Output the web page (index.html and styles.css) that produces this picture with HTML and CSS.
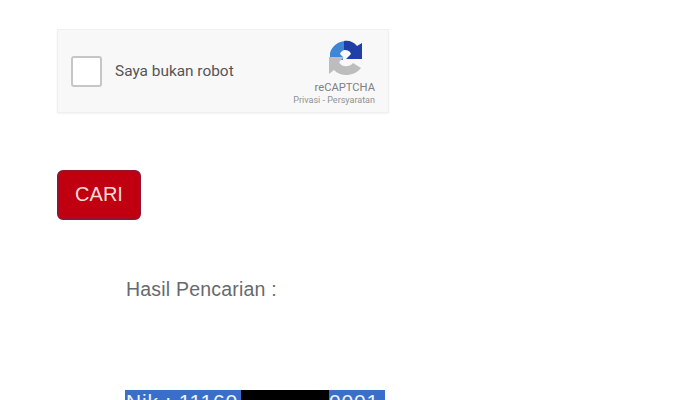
FILE: index.html
```html
<!DOCTYPE html>
<html lang="id">
<head>
<meta charset="utf-8">
<title>Hasil Pencarian</title>
<link rel="stylesheet" href="styles.css">
</head>
<body>
<main class="page">
  <div class="captcha">
    <span class="check"></span>
    <span class="captcha-label">Saya bukan robot</span>
    <div class="brand">
      <svg class="logo" viewBox="0 0 34 36" width="34" height="36" aria-hidden="true">
        <path fill="#3f86d6" d="M1 20 L1 13 C3 6 9 1 17 1 L20 1 L20 10 C15 9 12 11 11 14 L14 17 L14 20 Z"/>
        <path fill="#1f3fa6" d="M15 1 C20 0 25 2 28 6 L33 3 L33 19 L17 19 L22 14 C21 11 19 10 15 10 Z"/>
        <path fill="#bdbdbd" d="M0 17 L15 17 L10 22 C12 27 20 28 24 23 L32 28 C26 36 12 38 5 30 L0 34 Z"/>
      </svg>
      <span class="brand-name">reCAPTCHA</span>
      <span class="brand-links">Privasi - Persyaratan</span>
    </div>
  </div>
  <button class="search" type="button">CARI</button>
  <section class="results">
    <h2 class="results-title">Hasil Pencarian :</h2>
    <p class="nik"><span class="nik-start">Nik : 11160</span><span class="redact"></span><span class="nik-end">0001</span></p>
  </section>
</main>
</body>
</html>
```

FILE: styles.css
```css
html, body {
  margin: 0;
  height: 400px;
  overflow: hidden;
  background: #fff;
}
body {
  font-family: "Liberation Sans", Arial, sans-serif;
}
.page {
  padding: 29px 0 0 57px;
}
.captcha {
  box-sizing: border-box;
  width: 332px;
  height: 84px;
  display: flex;
  align-items: center;
  padding: 0 13px 0 13px;
  background: #f8f8f8;
  border: 1px solid #efefef;
  box-shadow: 0 1px 2px rgba(0, 0, 0, .05);
}
.check {
  box-sizing: border-box;
  width: 31px;
  height: 31px;
  background: #fff;
  border: 2px solid #c6c6c6;
  border-radius: 3px;
  margin-right: 13px;
}
.captcha-label {
  font-family: Roboto, "Liberation Sans", sans-serif;
  font-size: 15.4px;
  color: #555;
  flex: 1;
  white-space: nowrap;
}
.brand {
  display: flex;
  flex-direction: column;
  align-items: flex-end;
  padding-top: 4px;
}
.logo {
  display: block;
  margin: 0 12px 5px 0;
}
.brand-name {
  font-family: Roboto, "Liberation Sans", sans-serif;
  font-size: 11.2px;
  line-height: 13px;
  color: #808080;
}
.brand-links {
  font-family: Roboto, "Liberation Sans", sans-serif;
  font-size: 9px;
  line-height: 12px;
  color: #929292;
  white-space: nowrap;
}
.search {
  display: block;
  box-sizing: border-box;
  width: 84px;
  height: 50px;
  margin: 57px 0 0;
  padding: 0 0 2px;
  background: #c00010;
  border: 2px solid #961030;
  border-radius: 6px;
  color: #fbdcd8;
  font: 20px "Liberation Sans", Arial, sans-serif;
}
.results {
  padding: 59px 0 0 68px;
}
.results-title {
  margin: 0;
  padding-left: 1px;
  font-size: 19.5px;
  font-weight: normal;
  line-height: 21px;
  color: #666a6e;
  letter-spacing: .2px;
}
.nik {
  display: flex;
  width: 260px;
  height: 24px;
  margin: 90px 0 0;
  background: #3a6fc9;
  color: #eef3fb;
  font-size: 21px;
  line-height: 23px;
  letter-spacing: .8px;
  white-space: nowrap;
}
.nik-start {
  width: 116px;
  padding-left: 1px;
  box-sizing: border-box;
  flex: none;
}
.redact {
  width: 88px;
  background: #000;
  flex: none;
}
.nik-end {
  flex: none;
}
```
